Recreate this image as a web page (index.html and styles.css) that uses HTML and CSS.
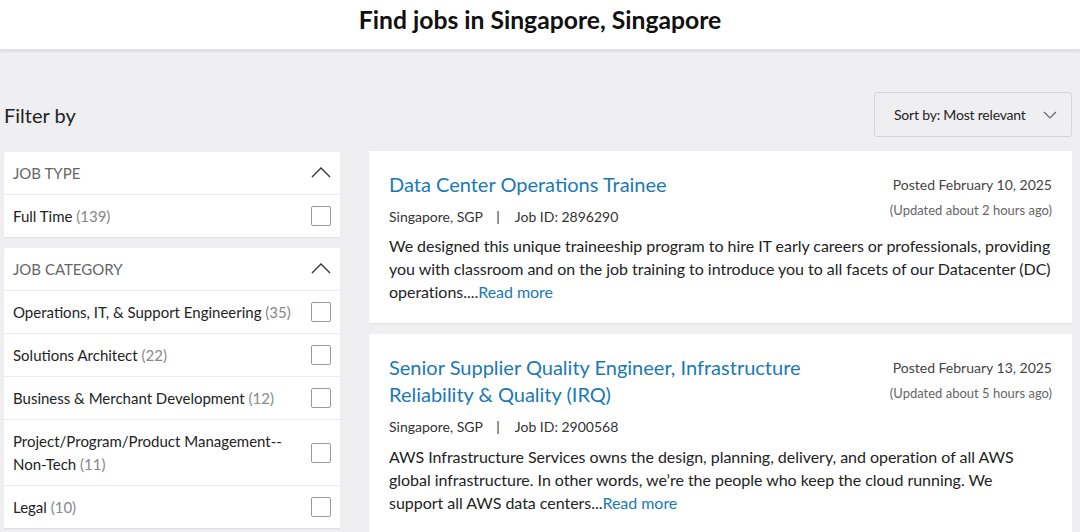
FILE: index.html
```html
<!DOCTYPE html>
<html lang="en">
<head>
<meta charset="utf-8">
<title>Find jobs in Singapore, Singapore</title>
<link rel="stylesheet" href="styles.css">
</head>
<body>
<header class="page-header">
  <h1 class="page-title">Find jobs in Singapore, Singapore</h1>
</header>
<main class="content">
  <div class="toolbar">
    <h2 class="filter-title">Filter by</h2>
    <button class="sort-btn"><span class="sort-text">Sort by: Most relevant</span>
      <svg class="sort-chev" width="14" height="8" viewBox="0 0 14 8"><path d="M1 1 L7 7 L13 1" fill="none" stroke="#666" stroke-width="1.2"/></svg>
    </button>
  </div>
  <div class="columns">
    <aside class="filters">
      <section class="filter-card">
        <div class="filter-head">
          <span>JOB TYPE</span>
          <svg class="chev-up" width="20" height="12" viewBox="0 0 20 12"><path d="M1 11 L10 2 L19 11" fill="none" stroke="#333" stroke-width="1.4"/></svg>
        </div>
        <div class="filter-row"><span class="label">Full Time <span class="count">(139)</span></span><span class="check"></span></div>
      </section>
      <section class="filter-card">
        <div class="filter-head">
          <span>JOB CATEGORY</span>
          <svg class="chev-up" width="20" height="12" viewBox="0 0 20 12"><path d="M1 11 L10 2 L19 11" fill="none" stroke="#333" stroke-width="1.4"/></svg>
        </div>
        <div class="filter-row"><span class="label">Operations, IT, &amp; Support Engineering <span class="count">(35)</span></span><span class="check"></span></div>
        <div class="filter-row"><span class="label">Solutions Architect <span class="count">(22)</span></span><span class="check"></span></div>
        <div class="filter-row"><span class="label">Business &amp; Merchant Development <span class="count">(12)</span></span><span class="check"></span></div>
        <div class="filter-row tall"><span class="label">Project/Program/Product Management--<br>Non-Tech <span class="count">(11)</span></span><span class="check"></span></div>
        <div class="filter-row"><span class="label">Legal <span class="count">(10)</span></span><span class="check"></span></div>
      </section>
    </aside>
    <div class="jobs">
      <article class="job-card">
        <div class="job-top">
          <div class="job-main">
            <a class="job-title" href="#">Data Center Operations Trainee</a>
            <div class="job-meta">Singapore, SGP <span class="sep">|</span> Job ID: 2896290</div>
          </div>
          <div class="job-dates">
            <div class="posted">Posted February 10, 2025</div>
            <div class="updated">(Updated about 2 hours ago)</div>
          </div>
        </div>
        <p class="job-desc">We designed this unique traineeship program to hire IT early careers or professionals, providing you with classroom and on the job training to introduce you to all facets of our Datacenter (DC) operations....<a class="more" href="#">Read more</a></p>
      </article>
      <article class="job-card">
        <div class="job-top">
          <div class="job-main">
            <a class="job-title" href="#">Senior Supplier Quality Engineer, Infrastructure Reliability &amp; Quality (IRQ)</a>
            <div class="job-meta">Singapore, SGP <span class="sep">|</span> Job ID: 2900568</div>
          </div>
          <div class="job-dates">
            <div class="posted">Posted February 13, 2025</div>
            <div class="updated">(Updated about 5 hours ago)</div>
          </div>
        </div>
        <p class="job-desc">AWS Infrastructure Services owns the design, planning, delivery, and operation of all AWS global infrastructure. In other words, we’re the people who keep the cloud running. We <span class="keep">support all</span> AWS data centers...<a class="more" href="#">Read more</a></p>
      </article>
    </div>
  </div>
</main>
</body>
</html>
```
FILE: styles.css
```css
* { box-sizing: border-box; }
html, body { margin: 0; padding: 0; }
body {
  font-family: Lato, "Open Sans", "Liberation Sans", sans-serif;
  background: #efeff1;
  color: #232323;
  overflow: hidden;
}
.page-header {
  background: #fff;
  height: 50px;
  padding-top: 6px;
  box-shadow: 0 1px 3px rgba(0,0,0,0.12);
  border-bottom: 1px solid #e4e4e6;
  position: relative;
}
.page-title {
  margin: 0;
  text-align: center;
  font-size: 24.7px;
  line-height: 28px;
  font-weight: 700;
  color: #111;
}
.content {
  padding: 42px 8px 0 4px;
}
.toolbar {
  display: flex;
  justify-content: space-between;
  align-items: center;
  height: 45px;
}
.filter-title {
  margin: 0;
  font-size: 20px;
  font-weight: 400;
  color: #232323;
}
.sort-btn {
  font-family: inherit;
  display: flex;
  align-items: center;
  justify-content: space-between;
  height: 45px;
  width: 198px;
  padding: 0 14px 0 19px;
  background: #efeff1;
  border: 1px solid #d5d5d8;
  border-radius: 3px;
  font-size: 14px;
  color: #232323;
  white-space: nowrap;
}
.sort-text { letter-spacing: -0.2px; }
.sort-chev { flex: none; }
.columns {
  display: flex;
  gap: 29px;
  margin-top: 14px;
  align-items: flex-start;
}
.filters {
  width: 336px;
  flex: none;
  display: flex;
  flex-direction: column;
  gap: 11px;
  margin-top: 1px;
}
.filter-card {
  background: #fff;
  box-shadow: 0 1px 1px rgba(0,0,0,0.06);
}
.filter-head {
  height: 43px;
  display: flex;
  align-items: center;
  justify-content: space-between;
  padding: 0 9px 0 9px;
  font-size: 15px;
  color: #666;
  border-bottom: 1px solid #ececee;
}
.chev-up { margin-top: -2px; }
.filter-row {
  min-height: 43px;
  display: flex;
  align-items: center;
  justify-content: space-between;
  padding: 0 9px 0 9px;
  font-size: 15px;
  line-height: 23px;
  color: #232323;
  border-bottom: 1px solid #ececee;
}
.filter-row:last-child { border-bottom: none; min-height: 42px; }
.filter-row.tall { min-height: 66px; padding-top: 9px; padding-bottom: 9px; }
.count { color: #888; }
.check {
  flex: none;
  width: 20px;
  height: 20px;
  border: 1px solid #999;
  border-radius: 2px;
  background: #fff;
}
.jobs {
  flex: 1;
  display: flex;
  flex-direction: column;
  gap: 11px;
}
.job-card {
  background: #fff;
  padding: 20px;
  box-shadow: 0 1px 1px rgba(0,0,0,0.06);
}
.job-top {
  display: flex;
  justify-content: space-between;
  gap: 30px;
}
.job-main { flex: 1; min-width: 0; }
.job-title {
  display: block;
  font-size: 20px;
  line-height: 27px;
  color: #1a79b4;
  text-decoration: none;
  max-width: 440px;
}
.job-meta {
  margin-top: 9px;
  font-size: 14px;
  line-height: 20px;
  color: #333;
}
.sep { margin: 0 12px 0 10px; }
.job-dates {
  flex: none;
  text-align: right;
  padding-top: 4px;
}
.posted {
  font-size: 14px;
  line-height: 20px;
  color: #444;
}
.updated {
  margin-top: 5px;
  font-size: 13px;
  line-height: 20px;
  color: #666;
}
.job-desc {
  margin: 8px 0 0;
  font-size: 16px;
  line-height: 23px;
  letter-spacing: -0.035px;
  color: #232323;
}
.job-card:first-child .job-desc { margin-top: 7px; }
.keep { white-space: nowrap; }
.more {
  color: #1a79b4;
  text-decoration: none;
}
```
